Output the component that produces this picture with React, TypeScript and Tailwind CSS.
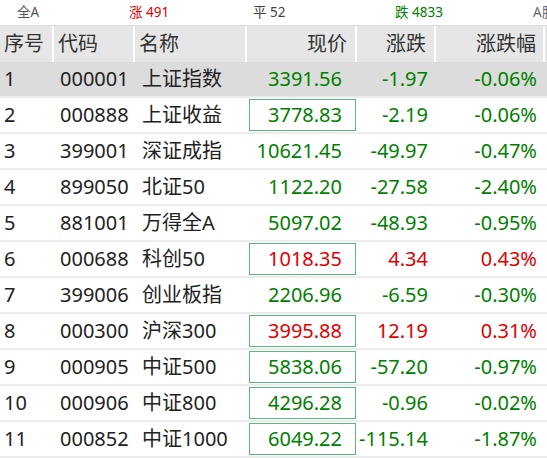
import React from "react";

type Row = { no: number; code: string; name: string; price: string; chg: string; pct: string; up: boolean; box: boolean };

const rows: Row[] = [
  { no: 1, code: "000001", name: "上证指数", price: "3391.56", chg: "-1.97", pct: "-0.06%", up: false, box: false },
  { no: 2, code: "000888", name: "上证收益", price: "3778.83", chg: "-2.19", pct: "-0.06%", up: false, box: true },
  { no: 3, code: "399001", name: "深证成指", price: "10621.45", chg: "-49.97", pct: "-0.47%", up: false, box: false },
  { no: 4, code: "899050", name: "北证50", price: "1122.20", chg: "-27.58", pct: "-2.40%", up: false, box: false },
  { no: 5, code: "881001", name: "万得全A", price: "5097.02", chg: "-48.93", pct: "-0.95%", up: false, box: false },
  { no: 6, code: "000688", name: "科创50", price: "1018.35", chg: "4.34", pct: "0.43%", up: true, box: true },
  { no: 7, code: "399006", name: "创业板指", price: "2206.96", chg: "-6.59", pct: "-0.30%", up: false, box: false },
  { no: 8, code: "000300", name: "沪深300", price: "3995.88", chg: "12.19", pct: "0.31%", up: true, box: true },
  { no: 9, code: "000905", name: "中证500", price: "5838.06", chg: "-57.20", pct: "-0.97%", up: false, box: true },
  { no: 10, code: "000906", name: "中证800", price: "4296.28", chg: "-0.96", pct: "-0.02%", up: false, box: true },
  { no: 11, code: "000852", name: "中证1000", price: "6049.22", chg: "-115.14", pct: "-1.87%", up: false, box: true },
];

const font = { fontFamily: '"Noto Sans", "Noto Sans CJK SC", sans-serif' };

export default function App() {
  return (
    <div className="w-[547px] h-[458px] overflow-hidden bg-white text-[#222]" style={font}>
      <div className="h-[26px] flex items-center text-[13.5px] border-b border-[#dddddd] pl-[17px] whitespace-nowrap overflow-hidden">
        <div className="w-[112px] shrink-0 text-[#555]">全A</div>
        <div className="w-[124px] shrink-0 text-[#e00000]">涨 491</div>
        <div className="w-[142px] shrink-0 text-[#444]">平 52</div>
        <div className="w-[138px] shrink-0 text-[#008000]">跌 4833</div>
        <div className="shrink-0 text-[#666]">A股</div>
      </div>
      <div className="h-[36px] bg-[#e6e6e6] grid grid-cols-[54px_81px_112px_110px_79px_109px_2px] text-[20px] text-[#333] items-center">
        <div className="h-full flex items-center pl-[4px] border-r-2 border-white">序号</div>
        <div className="h-full flex items-center pl-[4px] border-r-2 border-white">代码</div>
        <div className="h-full flex items-center pl-[4px] border-r-2 border-white">名称</div>
        <div className="h-full flex items-center justify-end pr-[8px] border-r-2 border-white">现价</div>
        <div className="h-full flex items-center justify-end pr-[8px] border-r-2 border-white">涨跌</div>
        <div className="h-full flex items-center justify-end pr-[7px] border-r-2 border-white">涨跌幅</div>
        <div />
      </div>
      {rows.map((r) => {
        const color = r.up ? "text-[#e00000]" : "text-[#008000]";
        return (
          <div
            key={r.no}
            className={`h-[36px] grid grid-cols-[54px_81px_112px_110px_79px_109px_2px] text-[20px] items-center border-b-2 border-[#ececec] ${r.no === 1 ? "bg-[#dcdcdc]" : ""}`}
          >
            <div className="pl-[4px]">{r.no}</div>
            <div className="pl-[6px]">{r.code}</div>
            <div className="pl-[7px] whitespace-nowrap">{r.name}</div>
            <div className="h-full py-[1px] pl-[2px] pr-[1px]">
              <div
                className={`h-full flex items-center justify-end pr-[13px] ${color} ${r.box ? "border border-[#5bb97c]" : "border border-transparent"}`}
              >
                {r.price}
              </div>
            </div>
            <div className={`text-right pr-[8px] ${color}`}>{r.chg}</div>
            <div className={`text-right pr-[8px] ${color}`}>{r.pct}</div>
            <div />
          </div>
        );
      })}
    </div>
  );
}
